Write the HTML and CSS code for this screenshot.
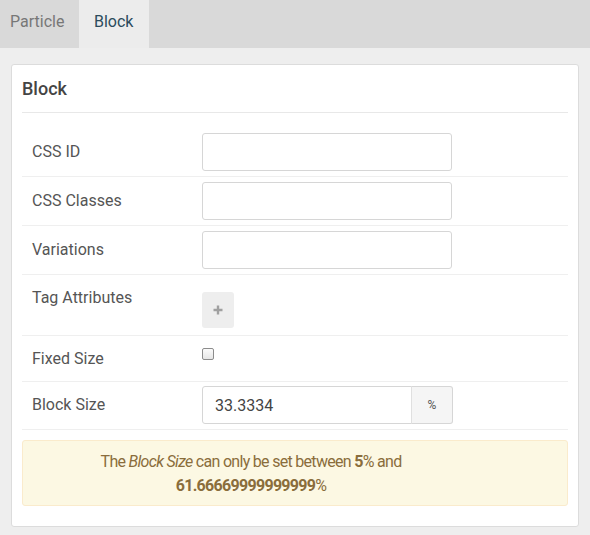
FILE: index.html
```html
<!DOCTYPE html>
<html>
<head>
<meta charset="utf-8">
<link rel="stylesheet" href="styles.css">
</head>
<body>
<div class="tabs">
  <div class="tab">Particle</div>
  <div class="tab active">Block</div>
</div>
<div class="content">
  <div class="card">
    <h3 class="card-title">Block</h3>
    <div class="rows">
      <div class="row first">
        <label class="label">CSS ID</label>
        <div class="field"><input class="input" type="text"></div>
      </div>
      <div class="row">
        <label class="label">CSS Classes</label>
        <div class="field"><input class="input" type="text"></div>
      </div>
      <div class="row">
        <label class="label">Variations</label>
        <div class="field"><input class="input" type="text"></div>
      </div>
      <div class="row tag-row">
        <label class="label">Tag Attributes</label>
        <div class="field"><span class="add-btn"><svg width="10" height="10" viewBox="0 0 10 10"><path d="M3.8 0.5h2.4v3.3h3.3v2.4H6.2v3.3H3.8V6.2H0.5V3.8h3.3z" fill="#a0a0a0"/></svg></span></div>
      </div>
      <div class="row check-row">
        <label class="label">Fixed Size</label>
        <div class="field"><span class="checkbox"></span></div>
      </div>
      <div class="row size-row">
        <label class="label">Block Size</label>
        <div class="field">
          <div class="group"><input class="input group-input" type="text" value="33.3334"><span class="addon">%</span></div>
        </div>
      </div>
    </div>
    <div class="alert">The <em>Block Size</em> can only be set between <strong>5</strong>% and <strong>61.66669999999999</strong>%</div>
  </div>
</div>
</body>
</html>
```
FILE: styles.css
```css
* { box-sizing: border-box; }
html, body { margin: 0; padding: 0; }
body {
  font-family: Roboto, "Liberation Sans", sans-serif;
  background: #eeeeee;
  width: 590px;
  height: 535px;
  overflow: hidden;
}
.tabs {
  display: flex;
  height: 48px;
  background: #d9d9d9;
}
.tab {
  height: 48px;
  line-height: 44px;
  font-size: 16px;
  color: #777;
  padding: 0 10px;
  width: 79px;
}
.tab.active {
  background: #ececec;
  color: #2b4b5c;
  width: 70px;
  padding: 0 15px;
}
.content {
  padding: 16px 11px 0 11px;
}
.card {
  background: #fff;
  border: 1px solid #dcdcdc;
  border-radius: 3px;
  padding: 0 10px 20px 10px;
  height: 463px;
}
.card-title {
  margin: 0;
  font-size: 18px;
  font-weight: 500;
  color: #444;
  height: 48px;
  line-height: 48px;
  border-bottom: 1px solid #e8e8e8;
}
.rows {
  padding-top: 15px;
}
.row {
  display: flex;
  padding: 5px 0 5px 10px;
  border-bottom: 1px solid #efefef;
  min-height: 49px;
}
.label {
  width: 170px;
  flex: none;
  font-size: 16px;
  color: #555;
  line-height: 38px;
}
.field { display: flex; align-items: flex-start; }
.input {
  width: 250px;
  height: 38px;
  border: 1px solid #d6d6d6;
  border-radius: 3px;
  font-family: Roboto, "Liberation Sans", sans-serif;
  font-size: 16px;
  color: #444;
  padding: 0 12px;
  outline: none;
  margin: 0;
}
.tag-row { padding-top: 5px; min-height: 61px; }
.tag-row .label { line-height: 36px; }
.add-btn {
  margin-top: 12px;
  width: 32px;
  height: 36px;
  background: #eeeeee;
  border-radius: 3px;
  display: flex;
  align-items: center;
  justify-content: center;
}
.check-row { min-height: 46px; height: 46px; padding-top: 3px; padding-bottom: 3px; }
.check-row .label { line-height: 40px; }
.checkbox {
  margin-top: 9px;
  width: 12px;
  height: 12px;
  border: 1px solid #8c8c8c;
  border-radius: 2px;
  background: linear-gradient(#fbfbfb, #e6e6e6);
}
.size-row { min-height: 48px; height: 48px; padding-top: 4px; padding-bottom: 4px; }
.size-row .label { line-height: 38px; }
.group { display: flex; }
.group-input {
  width: 210px;
  border-radius: 3px 0 0 3px;
}
.addon {
  width: 42px;
  height: 38px;
  border: 1px solid #d6d6d6;
  border-left: 1px solid #e0e0e0;
  border-radius: 0 3px 3px 0;
  background: #f5f5f5;
  color: #555;
  font-size: 12px;
  display: flex;
  align-items: center;
  justify-content: center;
  margin-left: -1px;
}
.alert {
  margin-top: 10px;
  background: #fcf8e3;
  border: 1px solid #faebcc;
  border-radius: 3px;
  color: #8a6d3b;
  font-size: 16px;
  letter-spacing: -0.7px;
  line-height: 24px;
  text-align: center;
  padding: 9px 118px 8px 30px;
  height: 66px;
}
.alert strong { font-weight: 700; }
```
